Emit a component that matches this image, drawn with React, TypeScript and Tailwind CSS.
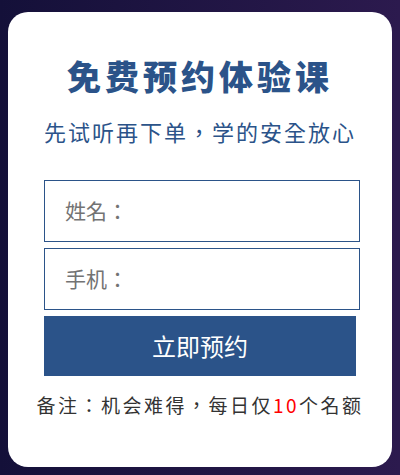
import { FC } from 'react';

const fields = ['姓名：', '手机：'];

const App: FC = () => {
  return (
    <div
      className="h-[475px] w-[400px] overflow-hidden bg-gradient-to-r from-[#141039] to-[#2c1a4e] px-2 pt-3"
      style={{ fontFamily: '"Noto Sans CJK TC", "Noto Sans", sans-serif' }}
    >
      <div className="flex h-[455px] w-[384px] flex-col rounded-[20px] bg-white pt-10">
        <h1 className="text-center text-[34px] font-black leading-[48px] tracking-[4px] text-[#2b5389]">
          免费预约体验课
        </h1>
        <p className="mt-4 text-center text-[22px] leading-[30px] tracking-[2px] text-[#2b5389]">
          先试听再下单，学的安全放心
        </p>

        <div className="mt-[34px] flex flex-col gap-[6px] pl-9">
          {fields.map(label => (
            <div
              key={label}
              className="flex h-[62px] w-[316px] items-center border border-[#2b5389] pl-5 text-[21px] text-[#737373]"
            >
              {label}
            </div>
          ))}
          <button
            type="button"
            className="h-[60px] w-[312px] bg-[#2b5389] text-[24px] text-white"
          >
            立即预约
          </button>
        </div>

        <p className="mt-[17px] text-center text-[19px] leading-[24px] tracking-[2.5px] text-[#333]">
          备注：机会难得，每日仅<span className="text-[#ff0000]">10</span>个名额
        </p>
      </div>
    </div>
  );
};

export default App;
